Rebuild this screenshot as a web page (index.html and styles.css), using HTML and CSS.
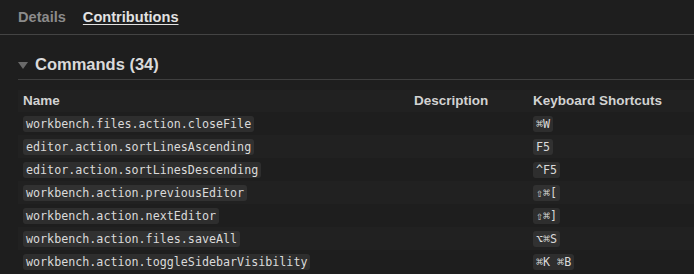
FILE: index.html
```html
<!DOCTYPE html>
<html>
<head>
<meta charset="utf-8">
<link rel="stylesheet" href="styles.css">
</head>
<body>
<div class="tabs">
  <span class="tab">Details</span>
  <span class="tab active">Contributions</span>
</div>
<div class="section">
  <div class="section-header">
    <svg class="twisty" width="10" height="7" viewBox="0 0 10 7"><polygon points="0,0 10,0 5,7" fill="#6a6a6a"/></svg>
    <span>Commands (34)</span>
  </div>
  <table class="cmds">
    <colgroup><col class="c-name"><col class="c-desc"><col class="c-keys"></colgroup>
    <tr class="head"><th>Name</th><th>Description</th><th>Keyboard Shortcuts</th></tr>
    <tr><td><code>workbench.files.action.closeFile</code></td><td></td><td><code>⌘W</code></td></tr>
    <tr><td><code>editor.action.sortLinesAscending</code></td><td></td><td><code>F5</code></td></tr>
    <tr><td><code>editor.action.sortLinesDescending</code></td><td></td><td><code>^F5</code></td></tr>
    <tr><td><code>workbench.action.previousEditor</code></td><td></td><td><code>⇧⌘[</code></td></tr>
    <tr><td><code>workbench.action.nextEditor</code></td><td></td><td><code>⇧⌘]</code></td></tr>
    <tr><td><code>workbench.action.files.saveAll</code></td><td></td><td><code>⌥⌘S</code></td></tr>
    <tr><td><code>workbench.action.toggleSidebarVisibility</code></td><td></td><td><code>⌘K ⌘B</code></td></tr>
  </table>
</div>
</body>
</html>
```
FILE: styles.css
```css
html, body {
  margin: 0;
  background: #1e1e1e;
  overflow: hidden;
}
body {
  font-family: "Liberation Sans", Arial, sans-serif;
  color: #d4d4d4;
  width: 694px;
  height: 274px;
}
.tabs {
  display: flex;
  gap: 17px;
  padding: 9px 0 8px 18px;
  height: 17px;
  border-bottom: 1px solid #444444;
}
.tab {
  font-size: 14.6px;
  font-weight: bold;
  line-height: 17px;
  color: #8b8b8b;
}
.tab.active {
  color: #e2e2e2;
  text-decoration: underline;
  text-underline-offset: 2px;
  text-decoration-thickness: 1px;
}
.section {
  padding-left: 18px;
}
.section-header {
  display: flex;
  align-items: center;
  gap: 7px;
  margin-top: 20px;
  padding-bottom: 5px;
  height: 19px;
  line-height: 19px;
  font-size: 16.5px;
  font-weight: bold;
  color: #dadada;
  border-bottom: 1px solid #3f3f3f;
}
.twisty {
  flex: none;
  margin-top: 1px;
}
.cmds {
  margin-top: 10px;
  width: 676px;
  border-collapse: collapse;
  table-layout: fixed;
}
.c-name { width: 391px; }
.c-desc { width: 119px; }
.c-keys { width: 166px; }
.cmds th {
  text-align: left;
  font-size: 13.5px;
  font-weight: bold;
  color: #d2d2d2;
  height: 22px;
  padding: 0 0 0 5px;
  line-height: 22px;
}
.cmds td {
  height: 21px;
  padding: 0 0 2px 5px;
  vertical-align: middle;
}
.cmds tr:nth-child(odd) {
  background: rgba(130, 130, 130, 0.04);
}
.cmds code {
  font-family: "DejaVu Sans Mono", Menlo, monospace;
  font-size: 11.7px;
  line-height: 14px;
  color: #dadada;
  background: rgba(128, 128, 128, 0.17);
  border-radius: 3px;
  padding: 1px 3px;
  display: inline-block;
  white-space: nowrap;
}
```
